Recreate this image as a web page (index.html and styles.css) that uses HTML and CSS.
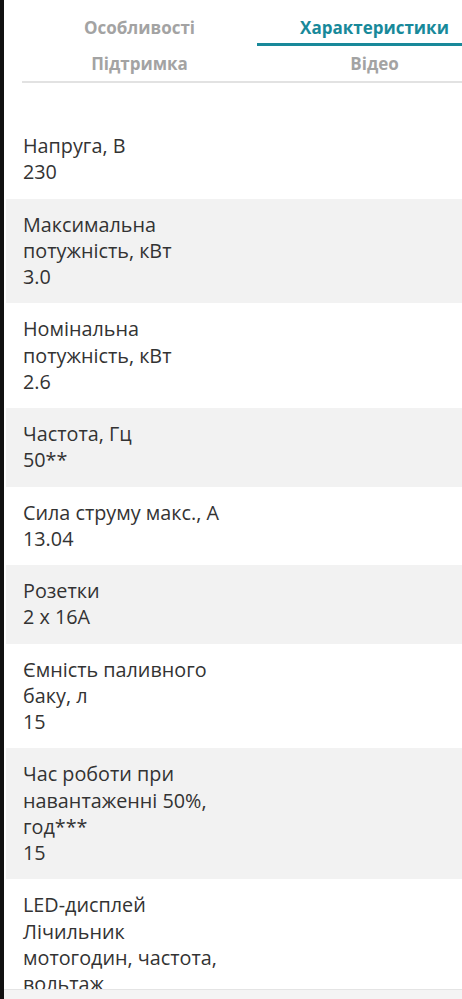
FILE: index.html
```html
<html lang="uk">
    <head>
        <meta charset="UTF-8">
        <meta name="viewport" content="width=device-width, initial-scale=1.0">
        <title>Характеристики</title>
        <link rel="stylesheet" href="styles.css">
    </head>
    <body>
        <div class="page">
            <div class="tabs">
                <div class="tab">Особливості</div>
                <div class="tab active">Характеристики</div>
                <div class="tab">Підтримка</div>
                <div class="tab">Відео</div>
            </div>

            <div class="specs">
                <div class="spec">
                    <div class="label">Напруга, В</div>
                    <div class="value">230</div>
                </div>
                <div class="spec">
                    <div class="label">Максимальна потужність, кВт</div>
                    <div class="value">3.0</div>
                </div>
                <div class="spec">
                    <div class="label">Номінальна потужність, кВт</div>
                    <div class="value">2.6</div>
                </div>
                <div class="spec">
                    <div class="label">Частота, Гц</div>
                    <div class="value">50**</div>
                </div>
                <div class="spec">
                    <div class="label">Сила струму макс., А</div>
                    <div class="value">13.04</div>
                </div>
                <div class="spec">
                    <div class="label">Розетки</div>
                    <div class="value">2 х 16А</div>
                </div>
                <div class="spec">
                    <div class="label">Ємність паливного баку, л</div>
                    <div class="value">15</div>
                </div>
                <div class="spec">
                    <div class="label">Час роботи при навантаженні 50%, год***</div>
                    <div class="value">15</div>
                </div>
                <div class="spec">
                    <div class="label">LED-дисплей</div>
                    <div class="value">Лічильник мотогодин, частота, вольтаж</div>
                </div>
            </div>
        </div>

        <div class="bottom-bar"></div>
    </body>
</html>
```

FILE: styles.css
```css
* {
    margin: 0;
    padding: 0;
    box-sizing: border-box;
}

body {
    background-color: white;
    font-family: "Open Sans", "Noto Sans", sans-serif;
    color: #333;
    overflow: hidden;
    height: 999px;
    border-left: 4px solid #111;
}

.page {
    padding-left: 2px;
    overflow: hidden;
}

.tabs {
    display: grid;
    grid-template-columns: 235px 235px;
    width: 470px;
    margin-left: 16px;
    padding-top: 8px;
    border-bottom: 2px solid #e2e2e2;
}

.tab {
    text-align: center;
    font-size: 17px;
    font-weight: 700;
    line-height: 22px;
    color: #a3a3a3;
    padding: 9px 0 4px;
    border-bottom: 3px solid transparent;
}

.tab:nth-child(n+3) {
    padding: 7px 0 3px;
}

.tab.active {
    color: #18899a;
    border-bottom-color: #18899a;
}

.specs {
    margin-top: 37px;
}

.spec {
    padding: 13px 17px;
    font-size: 19.8px;
    line-height: 26.25px;

    .label, .value {
        max-width: 204px;
    }
}

.spec:nth-child(even) {
    background-color: #f2f2f2;
}

.bottom-bar {
    position: fixed;
    left: 4px;
    right: 0;
    bottom: 0;
    height: 10px;
    background-color: #f4f4f4;
    border-top: 1px solid #e4e4e4;
}
```
